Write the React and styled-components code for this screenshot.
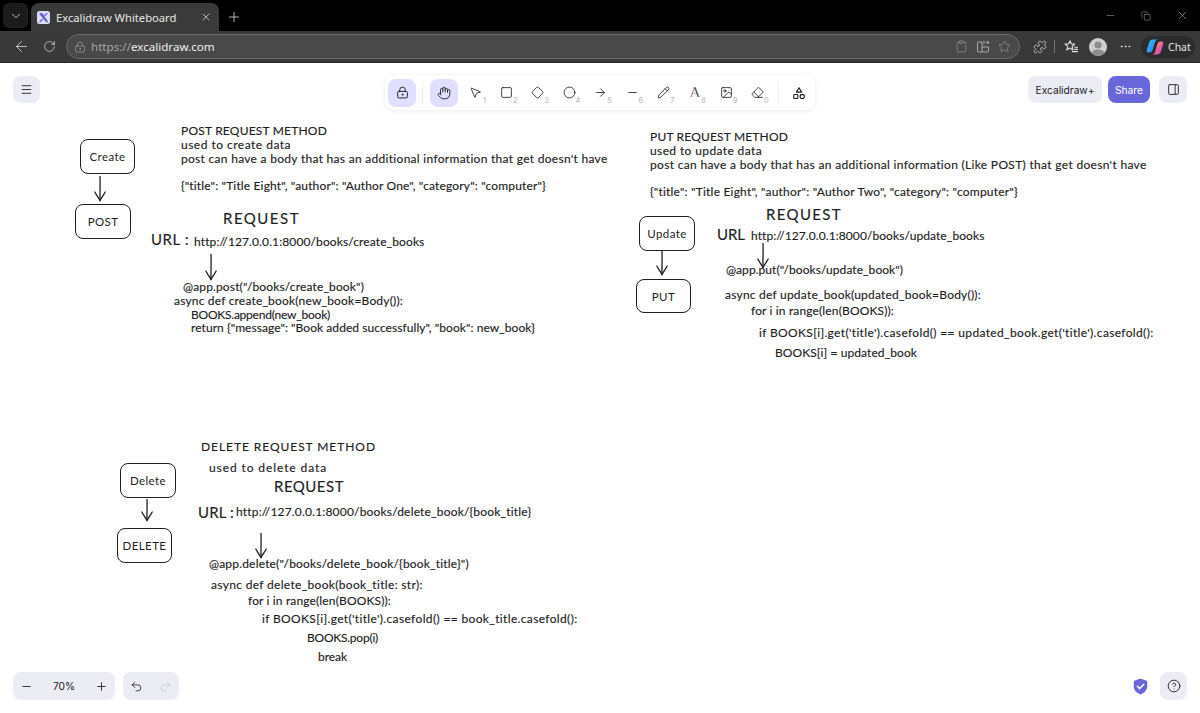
import React, { useLayoutEffect, useRef } from "react";
import styled, { createGlobalStyle } from "styled-components";
import {
  ArrowLeft, ArrowRight, ChevronDown, Circle, CircleHelp, Clipboard, Diamond, Eraser, Hand, Image as ImageIcon,
  LockKeyhole, Menu, Minus, MousePointer2, MoreHorizontal, PanelRight, Pencil, Plus, Redo2, RotateCw, Square, Star,
  Undo2, X, Copy, Puzzle,
} from "lucide-react";

const Global = createGlobalStyle`
  html, body { margin: 0; padding: 0; background: #fff; }
  * { box-sizing: border-box; }
  #root { height: 713px; overflow: hidden; }
`;

const Page = styled.div`
  display: flex; flex-direction: column; width: 1200px; height: 713px;
  font-family: "Noto Sans", "Liberation Sans", sans-serif;
`;

/* ---- browser chrome ---- */
const TabStrip = styled.div`
  display: flex; align-items: flex-end; height: 31px; background: #000; padding-left: 3px; color: #e6e6e6; flex: none;
`;
const TabMenu = styled.div`
  width: 25px; height: 25px; margin-bottom: 3px; margin-right: 3px; border-radius: 6px; background: #1b1b1b;
  display: flex; align-items: center; justify-content: center;
`;
const Tab = styled.div`
  width: 188px; height: 28px; background: #3a3a3a; border-radius: 8px 8px 0 0;
  display: flex; align-items: center; padding: 0 7px 0 6px; gap: 6px;
`;
const TabTitle = styled.span`
  flex: 1; font-size: 11.2px; color: #e8e8e8; white-space: nowrap;
`;
const NewTab = styled.div`
  width: 30px; height: 28px; display: flex; align-items: center; justify-content: center;
  margin-bottom: 0; color: #dcdcdc;
`;
const WindowControls = styled.div`
  margin-left: auto; height: 31px; display: flex; align-items: center; color: #c9c9c9;
`;
const WinButton = styled.div`
  width: 36px; height: 31px; display: flex; align-items: center; justify-content: center;
`;
const AddressRow = styled.div`
  flex: none; height: 32px; background: #393939; border-bottom: 1px solid #262626;
  display: flex; align-items: center; padding: 0 8px 0 7px; color: #d8d8d8;
`;
const NavButton = styled.div`
  width: 28px; height: 26px; display: flex; align-items: center; justify-content: center; flex: none;
`;
const Omnibox = styled.div`
  flex: none; width: 954px; height: 25px; margin-left: 3px; border-radius: 13px; background: #494949;
  border: 1px solid #6a6a6a; display: flex; align-items: center; padding: 0 4px 0 7px; color: #a8a8a8;
`;
const Url = styled.span`
  margin-left: 5px; font-size: 11.6px; color: #a6a6a6; flex: 1;
  & b { font-weight: 400; color: #f0f0f0; }
`;
const OmniIcon = styled.div`
  width: 21.5px; height: 20px; display: flex; align-items: center; justify-content: center; color: #a9a9a9;
`;
const ToolRight = styled.div`
  display: flex; align-items: center; margin-left: 9px; flex: 1; color: #dedede;
`;
const ChromeIcon = styled.div`
  display: flex; align-items: center; justify-content: center; flex: none; width: ${p => p.$w || 24}px;
`;
const Sep = styled.div`
  width: 1px; height: 13px; background: #777; margin: 0 4px 0 3px; flex: none;
`;
const Avatar = styled.div`
  width: 18px; height: 18px; border-radius: 50%; background: #cfcfcf; margin: 0 8px 0 6px; flex: none;
  display: flex; align-items: flex-end; justify-content: center; overflow: hidden;
`;
const ChatPill = styled.div`
  width: 54px; height: 22px; margin-left: 6px; border-radius: 11px; background: #2c2c2c; flex: none;
  display: flex; align-items: center; padding-left: 5px; gap: 4px; font-size: 10.5px; color: #e6e6e6;
`;

/* ---- excalidraw ---- */
const App = styled.main`
  position: relative; flex: 1; background: #fff; overflow: hidden;
  font-family: Inter, "Noto Sans", sans-serif;
`;
const Board = styled.div`
  position: absolute; inset: 0;
`;
const Ink = styled.div`
  position: absolute; left: ${p => p.$x}px; top: ${p => p.$y - 63 - 9}px; height: 18px; line-height: 18px;
  font-family: Lato, "Noto Sans", sans-serif; font-size: ${p => p.$size || 12}px; color: #1e1e1e; white-space: pre;
  -webkit-text-stroke: 0.15px #1e1e1e;
`;
const NodeBox = styled.div`
  position: absolute; left: ${p => p.$x}px; top: ${p => p.$y - 63}px; width: ${p => p.$w}px; height: ${p => p.$h}px;
  border: 1.5px solid #1e1e1e; border-radius: 8px; display: flex; align-items: center; justify-content: center;
  font-family: Lato, "Noto Sans", sans-serif; font-size: 11.5px; letter-spacing: 0.4px; color: #1e1e1e;
`;
const ArrowMark = styled.svg`
  position: absolute; left: ${p => p.$x - 7}px; top: ${p => p.$y - 63}px; overflow: visible;
`;

const Ui = styled.div`
  position: absolute; inset: 0; display: flex; flex-direction: column; justify-content: space-between;
  padding: 12px 13px 13px; pointer-events: none;
`;
const TopRow = styled.div`
  display: grid; grid-template-columns: 372px 430px 1fr; align-items: start;
`;
const IslandButton = styled.div`
  width: ${p => p.$w || 27}px; height: 27px; margin-top: 1px; border-radius: 8px; background: #ececf4; color: #1b1b1f;
  display: flex; align-items: center; justify-content: center; font-size: 10.2px;
`;
const ShareButton = styled(IslandButton)`
  background: #6965db; color: #fff;
`;
const TopActions = styled.div`
  display: flex; justify-content: flex-end; gap: 6px;
  & > :last-child { margin-left: 3px; }
`;
const Toolbar = styled.div`
  height: 35px; width: 430px; background: #fff; border-radius: 8px; display: flex; align-items: center;
  padding: 0 4px 0 3px; gap: 3.4px;
  box-shadow: 0 0 1px rgba(0,0,0,.1), 0 1px 5px rgba(0,0,0,.07);
`;
const Tool = styled.div`
  position: relative; width: 28px; height: 28px; flex: none; border-radius: 8px; color: #1b1b1f;
  display: flex; align-items: center; justify-content: center;
  background: ${p => (p.$active ? "#e0dfff" : "transparent")};
`;
const ToolKey = styled.span`
  position: absolute; right: 3px; bottom: 2px; font-size: 7.5px; color: #b5b5b5;
`;
const ToolDivider = styled.div`
  width: 1px; height: 22px; background: #f0f0f4; flex: none; margin: 0 3px;
`;
const LetterIcon = styled.span`
  font-family: "Liberation Serif", serif; font-size: 15px; line-height: 1; color: #1b1b1f; -webkit-text-stroke: 0.3px #fff;
  text-decoration: none;
`;
const BottomRow = styled.div`
  display: flex; align-items: center; gap: 8px;
`;
const BottomGroup = styled.div`
  width: ${p => p.$w}px; height: 28px; background: #ececf4; border-radius: 8px; color: #1b1b1f;
  display: flex; align-items: center; justify-content: space-between; padding: 0 7px; font-size: 10.2px;
`;
const BottomEnd = styled.div`
  margin-left: auto; display: flex; align-items: center; gap: 12px;
`;
const HelpButton = styled.div`
  width: 27px; height: 28px; background: #ececf4; border-radius: 8px; color: #1b1b1f;
  display: flex; align-items: center; justify-content: center;
`;

const Arrow = ({ x, y, len }) => (
  <ArrowMark $x={x} $y={y} width="14" height={len} viewBox={`0 0 14 ${len}`} fill="none" stroke="#1e1e1e" strokeWidth="1.3" strokeLinecap="round">
    <path d={`M7 0.5C7.3 ${len * 0.4} 6.8 ${len * 0.7} 7 ${len - 0.5}`} />
    <path d={`M1.8 ${len - 9}C3.5 ${len - 6} 5.5 ${len - 3} 7 ${len - 0.5}C8.5 ${len - 3} 10.5 ${len - 6} 12.2 ${len - 9}`} />
  </ArrowMark>
);

/* Stretches a handwriting-like line to the width it takes on the board. */
const Line = ({ x, right, y, size, children }) => {
  const ref = useRef(null);
  useLayoutEffect(() => {
    const el = ref.current;
    const chars = el.textContent.length;
    el.style.letterSpacing = `${(right - x - el.getBoundingClientRect().width) / chars}px`;
  }, [x, right]);
  return <Ink ref={ref} $x={x} $y={y} $size={size}>{children}</Ink>;
};

const LINES = [
  [181, 327, 131, "POST REQUEST METHOD"],
  [181, 291, 145, "used to create data"],
  [181, 608, 159, "post can have a body that has an additional information that get doesn't have"],
  [181, 546, 186, '{"title": "Title Eight", "author": "Author One", "category": "computer"}'],
  [223, 300, 218, "REQUEST", 15],
  [151, 189, 239, "URL :", 15],
  [194, 424, 242, "http://127.0.0.1:8000/books/create_books"],
  [183, 364, 287, '@app.post("/books/create_book")'],
  [174, 403, 301, "async def create_book(new_book=Body()):"],
  [191, 330, 315, "BOOKS.append(new_book)"],
  [191, 535, 328, 'return {"message": "Book added successfully", "book": new_book}'],

  [650, 788, 137, "PUT REQUEST METHOD"],
  [650, 762, 151, "used to update data"],
  [650, 1147, 165, "post can have a body that has an additional information (Like POST) that get doesn't have"],
  [650, 1018, 192, '{"title": "Title Eight", "author": "Author Two", "category": "computer"}'],
  [766, 842, 214, "REQUEST", 15],
  [717, 745, 234, "URL", 15],
  [751, 984, 236, "http://127.0.0.1:8000/books/update_books"],
  [726, 903, 270, '@app.put("/books/update_book")'],
  [725, 981, 295, "async def update_book(updated_book=Body()):"],
  [751, 894, 311, "for i in range(len(BOOKS)):"],
  [759, 1154, 333, "if BOOKS[i].get('title').casefold() == updated_book.get('title').casefold():"],
  [775, 917, 353, "BOOKS[i] = updated_book"],

  [201, 376, 447, "DELETE REQUEST METHOD"],
  [209, 327, 468, "used to delete data"],
  [274, 344, 486, "REQUEST", 15],
  [198, 234, 512, "URL :", 15],
  [236, 531, 512, "http://127.0.0.1:8000/books/delete_book/{book_title}"],
  [209, 469, 564, '@app.delete("/books/delete_book/{book_title}")'],
  [211, 423, 585, "async def delete_book(book_title: str):"],
  [248, 391, 601, "for i in range(len(BOOKS)):"],
  [262, 578, 619, "if BOOKS[i].get('title').casefold() == book_title.casefold():"],
  [307, 378, 638, "BOOKS.pop(i)"],
  [318, 347, 657, "break"],
];

const NODES = [
  [80, 139, 55, 35, "Create"], [75, 204, 56, 35, "POST"],
  [639, 216, 56, 35, "Update"], [636, 279, 55, 34, "PUT"],
  [120, 463, 56, 35, "Delete"], [117, 528, 55, 35, "DELETE"],
];

const ARROWS = [[100, 176, 25], [211, 254, 26], [763, 243, 25], [662, 251, 24], [147, 499, 22], [261, 533, 25]];

const Favicon = () => (
  <svg width="13" height="13" viewBox="0 0 13 13">
    <rect width="13" height="13" rx="2.5" fill="#dcdcf8" />
    <path d="M2 2.5 5 2 11 10.5 9.5 11.5Z" fill="#5b57d1" />
    <path d="M10.8 2.2 7.6 5.6 6.6 4.4 9.6 1.8ZM2 11 5.2 7.4 6.2 8.8 3.2 11.6Z" fill="#6965db" />
  </svg>
);
const SplitIcon = () => (
  <svg width="14" height="14" viewBox="0 0 14 14" fill="none" stroke="currentColor" strokeWidth="1">
    <path d="M1.5 3.5a1 1 0 0 1 1-1h3.5v10H2.5a1 1 0 0 1-1-1ZM6 7.5h6.5v4a1 1 0 0 1-1 1H6M8 1v3.8M11.8 1.2v3.4M10 3h3.6" transform="translate(0 -.5)" />
  </svg>
);
const FavList = () => (
  <svg width="15" height="15" viewBox="0 0 15 15" fill="none" stroke="currentColor" strokeWidth="1.1" strokeLinejoin="round">
    <path d="M6 1.8 7.4 5h3.2L8.2 7.3 9 11 6 9 2.8 11l.9-3.7L1 5h3.5Z" />
    <path d="M10.2 8.2H14M10.2 10.4H14M7.8 12.6H14" />
  </svg>
);
const Copilot = () => (
  <svg width="18" height="18" viewBox="0 0 18 18">
    <defs>
      <linearGradient id="cpa" x1="0" y1="0" x2="1" y2="1"><stop offset="0" stopColor="#27c7f5" /><stop offset="1" stopColor="#3f6ff0" /></linearGradient>
      <linearGradient id="cpb" x1="0" y1="0" x2="1" y2="1"><stop offset="0" stopColor="#f9c23c" /><stop offset=".5" stopColor="#f0619a" /><stop offset="1" stopColor="#b14be0" /></linearGradient>
    </defs>
    <path d="M7 1.5h4.5c-1.5.6-2.4 2-2.8 3.6L6.6 12c-.4 1.4-1.5 2.5-3 2.5H2.2c-1.2 0-1.8-1-1.5-2.2L3.2 4.2C3.7 2.6 5.2 1.5 7 1.5Z" fill="url(#cpa)" />
    <path d="M11 16.5H6.6c1.5-.6 2.4-2 2.8-3.6l2-6.9c.4-1.4 1.5-2.5 3-2.5h1.4c1.2 0 1.8 1 1.5 2.2l-2.5 8.1c-.5 1.6-2 2.7-3.8 2.7Z" fill="url(#cpb)" />
  </svg>
);
const Shapes = () => (
  <svg width="14" height="14" viewBox="0 0 24 24" fill="none" stroke="currentColor" strokeWidth="1.9" strokeLinejoin="round">
    <path d="M12 3 16.5 10.5H7.5Z" />
    <rect x="3" y="14.5" width="7" height="7" rx="1.2" />
    <circle cx="17.5" cy="18" r="3.6" />
  </svg>
);
const ShieldTick = () => (
  <svg width="15" height="17" viewBox="0 0 15 17">
    <path d="M7.5.6 14.2 3v5.2c0 3.8-2.8 6.8-6.7 8.2C3.6 15 .8 12 .8 8.2V3Z" fill="#6965db" />
    <path d="M4.4 8.3 6.7 10.6 10.8 6.2" fill="none" stroke="#fff" strokeWidth="1.5" strokeLinecap="round" strokeLinejoin="round" />
  </svg>
);

const TOOLS = [
  [MousePointer2, 1], [Square, 2], [Diamond, 3], [Circle, 4], [ArrowRight, 5], [Minus, 6], [Pencil, 7], ["A", 8], [ImageIcon, 9], [Eraser, 0],
];

export default function Page_() {
  return (
    <Page>
      <Global />
      <TabStrip>
        <TabMenu><ChevronDown size={14} strokeWidth={1.4} /></TabMenu>
        <Tab>
          <Favicon />
          <TabTitle>Excalidraw Whiteboard</TabTitle>
          <X size={12} strokeWidth={1.4} />
        </Tab>
        <NewTab><Plus size={16} strokeWidth={1.2} /></NewTab>
        <WindowControls>
          <WinButton><Minus size={11} strokeWidth={1} /></WinButton>
          <WinButton><Copy size={10} strokeWidth={1} /></WinButton>
          <WinButton><X size={13} strokeWidth={1} /></WinButton>
        </WindowControls>
      </TabStrip>
      <AddressRow>
        <NavButton><ArrowLeft size={17} strokeWidth={1.2} /></NavButton>
        <NavButton><RotateCw size={13} strokeWidth={1.4} /></NavButton>
        <Omnibox>
          <LockKeyhole size={12} strokeWidth={1.2} />
          <Url>https://<b>excalidraw.com</b></Url>
          <OmniIcon><Clipboard size={13} strokeWidth={1} /></OmniIcon>
          <OmniIcon><SplitIcon /></OmniIcon>
          <OmniIcon><Star size={13} strokeWidth={1} /></OmniIcon>
        </Omnibox>
        <ToolRight>
          <ChromeIcon $w={22}><Puzzle size={14} strokeWidth={1.2} /></ChromeIcon>
          <Sep />
          <ChromeIcon $w={24}><FavList /></ChromeIcon>
          <Avatar><svg width="18" height="18" viewBox="0 0 18 18"><circle cx="9" cy="7" r="3.6" fill="#8d8d8d" /><ellipse cx="9" cy="16" rx="7" ry="4.5" fill="#8d8d8d" /></svg></Avatar>
          <ChromeIcon $w={20}><MoreHorizontal size={13} strokeWidth={1.6} /></ChromeIcon>
          <ChatPill><Copilot />Chat</ChatPill>
        </ToolRight>
      </AddressRow>
      <App>
        <Board>
          {NODES.map(([x, y, w, h, t]) => <NodeBox key={t} $x={x} $y={y} $w={w} $h={h}>{t}</NodeBox>)}
          {ARROWS.map(([x, y, len]) => <Arrow key={`${x}-${y}`} x={x} y={y} len={len} />)}
          {LINES.map(([x, right, y, text, size]) => <Line key={`${x}-${y}`} x={x} right={right} y={y} size={size}>{text}</Line>)}
        </Board>
        <Ui>
          <TopRow>
            <IslandButton><Menu size={13} strokeWidth={1.6} /></IslandButton>
            <Toolbar>
              <Tool $active><LockKeyhole size={13} strokeWidth={1.7} /></Tool>
              <ToolDivider />
              <Tool $active><Hand size={14} strokeWidth={1.5} /></Tool>
              {TOOLS.map(([Icon, key]) => (
                <Tool key={key}>
                  {Icon === "A" ? <LetterIcon>A</LetterIcon> : <Icon size={13} strokeWidth={1.5} />}
                  <ToolKey>{key}</ToolKey>
                </Tool>
              ))}
              <ToolDivider />
              <Tool><Shapes /></Tool>
            </Toolbar>
            <TopActions>
              <IslandButton $w={74}>Excalidraw+</IslandButton>
              <ShareButton $w={42}>Share</ShareButton>
              <IslandButton $w={28}><PanelRight size={13} strokeWidth={1.6} /></IslandButton>
            </TopActions>
          </TopRow>
          <BottomRow>
            <BottomGroup $w={102}>
              <Minus size={13} strokeWidth={1.6} />
              <span>70%</span>
              <Plus size={13} strokeWidth={1.6} />
            </BottomGroup>
            <BottomGroup $w={56}>
              <Undo2 size={13} strokeWidth={1.5} />
              <Redo2 size={13} strokeWidth={1.5} color="#c8c8cf" />
            </BottomGroup>
            <BottomEnd>
              <ShieldTick />
              <HelpButton><CircleHelp size={14} strokeWidth={1.5} /></HelpButton>
            </BottomEnd>
          </BottomRow>
        </Ui>
      </App>
    </Page>
  );
}
